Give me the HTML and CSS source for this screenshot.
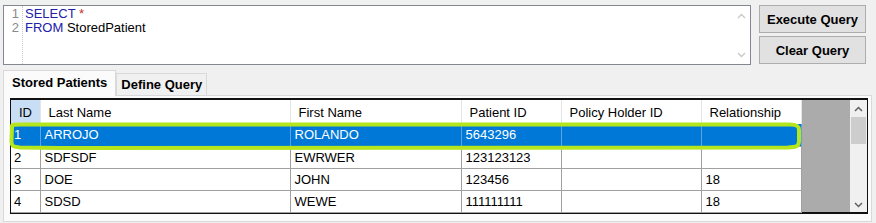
FILE: index.html
```html
<!DOCTYPE html>
<html>
<head>
    <meta charset="utf-8">
    <title>Stored Patients</title>
    <link rel="stylesheet" href="styles.css">
</head>
<body>
    <div class="top">
        <div class="editor">
            <div class="gutter">
                <div>1</div>
                <div>2</div>
            </div>
            <div class="code">
                <div><span class="kw">SELECT</span> <span class="star">*</span></div>
                <div><span class="kw">FROM</span> StoredPatient</div>
            </div>
            <div class="vscroll">
                <svg width="17" height="58" viewBox="0 0 17 58">
                    <path d="M5 12 L8.5 8.5 L12 12" fill="none" stroke="#c8c8c8" stroke-width="1.3"/>
                    <path d="M5 47 L8.5 50.5 L12 47" fill="none" stroke="#c8c8c8" stroke-width="1.3"/>
                </svg>
            </div>
        </div>
        <div class="actions">
            <button class="btn">Execute Query</button>
            <button class="btn">Clear Query</button>
        </div>
    </div>

    <div class="tabs">
        <div class="tab active">Stored Patients</div>
        <div class="tab">Define Query</div>
    </div>

    <div class="panel">
        <div class="grid">
            <div class="table-area">
                <table>
                    <colgroup>
                        <col style="width:29px">
                        <col style="width:250px">
                        <col style="width:171px">
                        <col style="width:100px">
                        <col style="width:140px">
                        <col style="width:100px">
                    </colgroup>
                    <thead>
                        <tr>
                            <th class="id-head">ID</th>
                            <th>Last Name</th>
                            <th>First Name</th>
                            <th>Patient ID</th>
                            <th>Policy Holder ID</th>
                            <th>Relationship</th>
                        </tr>
                    </thead>
                    <tbody>
                        <tr class="selected">
                            <td>1</td><td>ARROJO</td><td>ROLANDO</td><td>5643296</td><td></td><td></td>
                        </tr>
                        <tr>
                            <td>2</td><td>SDFSDF</td><td>EWRWER</td><td>123123123</td><td></td><td></td>
                        </tr>
                        <tr>
                            <td>3</td><td>DOE</td><td>JOHN</td><td>123456</td><td></td><td>18</td>
                        </tr>
                        <tr>
                            <td>4</td><td>SDSD</td><td>WEWE</td><td>111111111</td><td></td><td>18</td>
                        </tr>
                    </tbody>
                </table>
            </div>
            <div class="gscroll">
                <svg width="17" height="112" viewBox="0 0 17 112">
                    <path d="M5 11 L8.5 7.5 L12 11" fill="none" stroke="#606060" stroke-width="1.5"/>
                    <rect x="1" y="17" width="15" height="27" fill="#cdcdcd"/>
                    <path d="M5 103 L8.5 106.5 L12 103" fill="none" stroke="#606060" stroke-width="1.5"/>
                </svg>
            </div>
        </div>
    </div>

    <!-- hand-drawn highlight around the selected row -->
    <svg class="marker" width="876" height="223" viewBox="0 0 876 223">
        <path d="M12 127 C11 125 13 124.5 20 124.5 L790 124.5 C797 124.5 799 126 799 130 L799 141 C799 146 797 147 788 147.5 L60 148 L20 147.5 C13 147 11 146 11.5 140 Z"
              fill="none" stroke="#b5e61d" stroke-width="4" stroke-linejoin="round"/>
    </svg>
</body>
</html>
```

FILE: styles.css
```css
* {
    box-sizing: border-box;
}

body {
    margin: 0;
    width: 876px;
    height: 223px;
    background-color: #f0f0f0;
    font-family: "Liberation Sans", Arial, sans-serif;
    font-size: 13px;
    color: #000;
    position: relative;
    overflow: hidden;
}

/* Query editor + buttons */
.top {
    display: flex;
    padding: 5px 0 0 3px;
}

.editor {
    display: flex;
    width: 748px;
    height: 60px;
    background-color: #fff;
    border: 1px solid #828790;
}

.gutter {
    width: 19px;
    padding-top: 1px;
    padding-right: 3px;
    text-align: right;
    color: #8a8a8a;
    border-right: 1px dotted #c8c8c8;
    line-height: 14px;
}

.code {
    flex: 1;
    padding: 1px 0 0 2px;
    line-height: 14px;
}

.kw {
    color: #2020a8;
}

.star {
    color: #c03030;
}

.vscroll {
    width: 17px;
    background-color: #fff;
}

.actions {
    display: flex;
    flex-direction: column;
    gap: 3px;
    margin-left: 8px;
}

.btn {
    width: 107px;
    height: 28px;
    padding: 0;
    background-color: #e1e1e1;
    border: 1px solid #adadad;
    font-family: "Liberation Sans", Arial, sans-serif;
    font-size: 13px;
    font-weight: bold;
    color: #000;
}

/* Tabs */
.tabs {
    display: flex;
    align-items: flex-end;
    margin: 4px 0 0 3px;
    height: 26px;
}

.tab {
    border: 1px solid #d9d9d9;
    border-bottom: none;
    font-weight: bold;
    padding: 0 4px;
    height: 22px;
    line-height: 22px;
    background-color: #f0f0f0;
}

.tab.active {
    height: 26px;
    line-height: 24px;
    padding: 0 8px;
    background-color: #fbfbfb;
    border-color: #d9d9d9;
    position: relative;
    z-index: 1;
    margin-bottom: -1px;
}

.panel {
    margin-left: 3px;
    width: 869px;
    height: 127px;
    background-color: #fbfbfb;
    border: 1px solid #d9d9d9;
    padding: 2px 0 0 6px;
}

/* Data grid */
.grid {
    display: flex;
    width: 858px;
    height: 116px;
    border: 2px solid #111;
    border-left-width: 1px;
    border-right-width: 1px;
    border-bottom-width: 2px;
    background-color: #ababab;
}

.table-area {
    flex: 1;
    background-color: #ababab;
}

table {
    border-collapse: collapse;
    table-layout: fixed;
    width: 790px;
}

th {
    height: 24px;
    padding: 0 0 0 8px;
    background-color: #fff;
    font-weight: normal;
    text-align: left;
    border-right: 1px solid #e5e5e5;
    white-space: nowrap;
}

th.id-head {
    background-color: #c8def5;
    padding-left: 8px;
}

td {
    height: 22px;
    padding: 0 0 0 4px;
    background-color: #fff;
    border-right: 1px solid #a0a0a0;
    border-bottom: 1px solid #a0a0a0;
    white-space: nowrap;
}

td:first-child {
    padding-left: 3px;
}

tr.selected td {
    background-color: #0078d7;
    color: #fff;
    border-right-color: #5aa3e0;
}

.gscroll {
    width: 17px;
    background-color: #f0f0f0;
}

.marker {
    position: absolute;
    left: 0;
    top: 0;
    pointer-events: none;
}
```
